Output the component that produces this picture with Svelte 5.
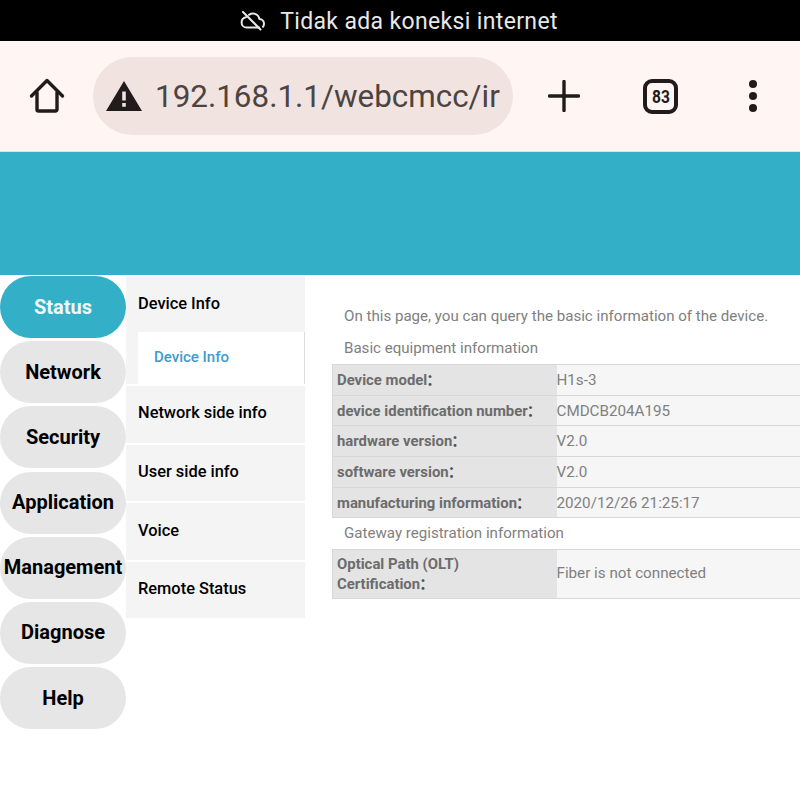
<script>
  const mainNav = ['Status', 'Network', 'Security', 'Application', 'Management', 'Diagnose', 'Help'];
  const subNav = ['Network side info', 'User side info', 'Voice', 'Remote Status'];
  const deviceRows = [
    ['Device model', 'H1s-3'],
    ['device identification number', 'CMDCB204A195'],
    ['hardware version', 'V2.0'],
    ['software version', 'V2.0'],
    ['manufacturing information', '2020/12/26 21:25:17']
  ];
</script>

<div class="phone">
  <div class="status-bar">
    <svg class="cloud" viewBox="0 0 26 20" width="26" height="20" fill="none" stroke="currentColor" stroke-width="2" stroke-linecap="round" stroke-linejoin="round">
      <path d="M6 6.200C3.400 6.600 1.600 8.800 1.600 11.400c0 2.900 2.300 5.200 5.200 5.200H19" />
      <path d="M9 3.800C10.200 3 11.600 2.600 13 2.600c3.200 0 5.900 2.300 6.400 5.400 2.600.2 4.600 2.300 4.600 4.800 0 1.100-.4 2.200-1 3" />
      <path d="M3 1 20.500 18.500" />
    </svg>
    <span>Tidak ada koneksi internet</span>
  </div>

  <div class="toolbar">
    <svg class="home" viewBox="0 0 36 36" width="36" height="36" fill="none" stroke="currentColor" stroke-width="3.400" stroke-linecap="round" stroke-linejoin="round">
      <path d="M2.500 18 18 2.500 33.500 18" />
      <path d="M8 14.500V31.500a1.500 1.500 0 0 0 1.500 1.500h17a1.500 1.500 0 0 0 1.500-1.500V14.500" />
    </svg>
    <div class="url-pill">
      <svg class="warn" viewBox="0 0 36 30" width="36" height="30">
        <path fill="#211c1b" fill-rule="evenodd" d="M18 0 36 30H0ZM16.200 10.500v9h3.600v-9ZM16.200 22v3.800h3.600V22Z" />
      </svg>
      <div class="url">192.168.1.1/webcmcc/ir</div>
    </div>
    <svg class="plus" viewBox="0 0 32 32" width="32" height="32" fill="none" stroke="currentColor" stroke-width="3.400" stroke-linecap="round">
      <path d="M16 1.500v29M1.500 16h29" />
    </svg>
    <div class="tabs"><span>83</span></div>
    <div class="dots"><i></i><i></i><i></i></div>
  </div>

  <div class="banner"></div>

  <div class="content">
    <nav class="main-nav">
      {#each mainNav as item, i}
        <div class="pill" class:active={i === 0}><span>{item}</span></div>
      {/each}
    </nav>

    <nav class="sub-nav">
      <div class="sub-group">
        <div class="sub-title">Device Info</div>
        <div class="sub-child">Device Info</div>
      </div>
      {#each subNav as item}
        <div class="sub-item">{item}</div>
      {/each}
    </nav>

    <main class="page">
      <p class="intro">On this page, you can query the basic information of the device.</p>
      <p class="heading">Basic equipment information</p>
      <table>
        <tbody>
          {#each deviceRows as row}
            <tr>
              <th>{row[0]}<span class="colon">：</span></th>
              <td>{row[1]}</td>
            </tr>
          {/each}
        </tbody>
      </table>
      <p class="heading second">Gateway registration information</p>
      <table>
        <tbody>
          <tr class="tall">
            <th>Optical Path (OLT)<br />Certification<span class="colon">：</span></th>
            <td>Fiber is not connected</td>
          </tr>
        </tbody>
      </table>
    </main>
  </div>
</div>

<style>
  :global(body) {
    margin: 0;
    background: #fff;
  }

  .phone {
    width: 800px;
    height: 800px;
    overflow: hidden;
    font-family: Roboto, "Noto Sans CJK SC", sans-serif;
  }

  .status-bar {
    height: 41px;
    padding-top: 1px;
    box-sizing: border-box;
    background: #000;
    color: #e8e8e8;
    display: flex;
    align-items: center;
    justify-content: center;
    gap: 14px;
    font-size: 23px;
    letter-spacing: 0.35px;
  }

  .cloud {
    flex-shrink: 0;
    margin-left: -2px;
  }

  .toolbar {
    height: 110px;
    background: #fff6f3;
    border-bottom: 1px solid #dfe3e3;
    display: flex;
    align-items: center;
    color: #211c1b;
  }

  .home {
    margin-left: 29px;
    flex-shrink: 0;
  }

  .url-pill {
    margin-left: 28px;
    width: 420px;
    height: 78px;
    border-radius: 39px;
    background: #f0e3e0;
    display: flex;
    align-items: center;
    padding-left: 13px;
    box-sizing: border-box;
    flex-shrink: 0;
  }

  .warn {
    flex-shrink: 0;
  }

  .url {
    margin-left: 13px;
    width: 350px;
    white-space: nowrap;
    font-size: 31.4px;
    color: #4d4442;
  }

  .plus {
    margin-left: 35px;
    flex-shrink: 0;
  }

  .tabs {
    margin-left: 63px;
    width: 35px;
    height: 35px;
    box-sizing: border-box;
    border: 4px solid #211c1b;
    border-radius: 9px;
    display: flex;
    align-items: center;
    justify-content: center;
    font-size: 19px;
    font-weight: 700;
    flex-shrink: 0;
  }

  .tabs span {
    display: block;
    transform: scaleX(0.82);
  }

  .dots {
    margin-left: 71px;
    display: flex;
    flex-direction: column;
    gap: 4px;
  }

  .dots i {
    display: block;
    width: 8px;
    height: 8px;
    border-radius: 50%;
    background: #211c1b;
  }

  .banner {
    height: 123px;
    background: #33b0c8;
  }

  .content {
    display: flex;
    align-items: flex-start;
  }

  .main-nav {
    width: 126px;
    padding-top: 1px;
    display: flex;
    flex-direction: column;
    gap: 3.2px;
    flex-shrink: 0;
  }

  .pill {
    height: 62px;
    border-radius: 31px;
    background: #e6e6e6;
    color: #000;
    font-size: 20px;
    font-weight: 700;
    display: flex;
    align-items: center;
    justify-content: center;
    white-space: nowrap;
  }

  .pill span {
    margin-top: -1px;
  }

  .pill.active {
    background: #33b0c8;
    color: #eef8f8;
  }

  .sub-nav {
    width: 179px;
    padding-top: 1px;
    display: flex;
    flex-direction: column;
    gap: 2.3px;
    flex-shrink: 0;
    font-size: 16.4px;
    font-weight: 500;
    color: #000;
  }

  .sub-group {
    background: #f4f4f4;
    padding-left: 12px;
  }

  .sub-title {
    height: 54px;
    padding-bottom: 2px;
    display: flex;
    align-items: center;
  }

  .sub-child {
    height: 52px;
    background: #fff;
    border-right: 1px solid #dddddd;
    box-sizing: border-box;
    padding: 0 0 3px 16px;
    display: flex;
    align-items: center;
    color: #3d9bd0;
    font-size: 15px;
  }

  .sub-item {
    height: 56.3px;
    box-sizing: border-box;
    padding: 0 0 3px 12px;
    background: #f4f4f4;
    display: flex;
    align-items: center;
  }

  .page {
    flex: 1;
    min-width: 0;
    padding: 31px 0 0 27px;
    color: #808080;
    font-size: 15.1px;
  }

  p {
    margin: 0;
    padding-left: 12px;
    white-space: nowrap;
  }

  .intro {
    line-height: 20px;
  }

  .heading {
    margin-top: 12px;
    line-height: 20px;
    margin-bottom: 6px;
  }

  .heading.second {
    margin-top: 5px;
    margin-bottom: 6px;
  }

  table {
    width: 520px;
    border-collapse: collapse;
    table-layout: fixed;
    border-top: 1px solid #d8d8d8;
    border-left: 1px solid #d8d8d8;
  }

  tr {
    height: 30.7px;
    border-bottom: 1px solid #d8d8d8;
  }

  th {
    width: 224px;
    padding: 0 0 0 4px;
    background: #e4e4e4;
    box-sizing: border-box;
    text-align: left;
    color: #6c6c6c;
    font-size: 14.9px;
    font-weight: 700;
    white-space: nowrap;
  }

  td {
    padding: 0;
    background: #f6f6f6;
    color: #808080;
    font-size: 15.2px;
  }

  .colon {
    font-family: "Noto Sans CJK SC", sans-serif;
    font-size: 15px;
    line-height: 1;
    color: #505050;
    margin-left: -1px;
  }

  .tall {
    height: 49px;
  }

  .tall th {
    line-height: 20px;
  }

  .tall td {
    padding-bottom: 2px;
  }
</style>
